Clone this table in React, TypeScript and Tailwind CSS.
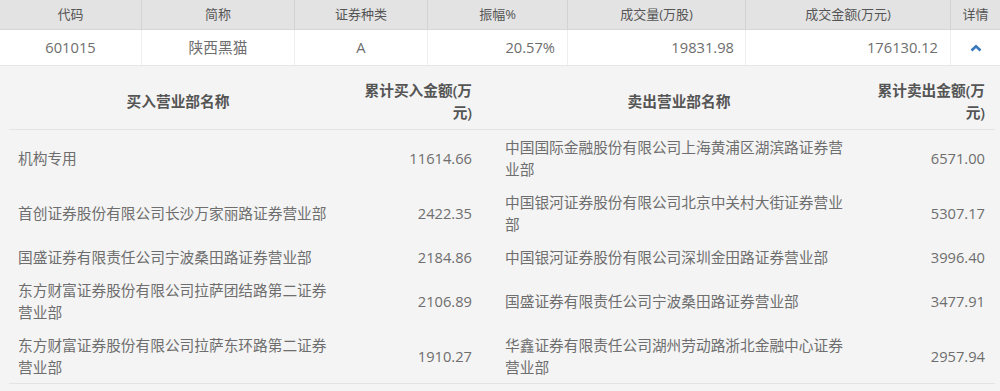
import React from 'react';

const summary = {
    code: '601015',
    name: '陕西黑猫',
    type: 'A',
    amplitude: '20.57%',
    volume: '19831.98',
    turnover: '176130.12',
};

const rows = [
    { buy: '机构专用', buyAmt: '11614.66', sell: '中国国际金融股份有限公司上海黄浦区湖滨路证券营业部', sellAmt: '6571.00' },
    { buy: '首创证券股份有限公司长沙万家丽路证券营业部', buyAmt: '2422.35', sell: '中国银河证券股份有限公司北京中关村大街证券营业部', sellAmt: '5307.17' },
    { buy: '国盛证券有限责任公司宁波桑田路证券营业部', buyAmt: '2184.86', sell: '中国银河证券股份有限公司深圳金田路证券营业部', sellAmt: '3996.40' },
    { buy: '东方财富证券股份有限公司拉萨团结路第二证券营业部', buyAmt: '2106.89', sell: '国盛证券有限责任公司宁波桑田路证券营业部', sellAmt: '3477.91' },
    { buy: '东方财富证券股份有限公司拉萨东环路第二证券营业部', buyAmt: '1910.27', sell: '华鑫证券有限责任公司湖州劳动路浙北金融中心证券营业部', sellAmt: '2957.94' },
];

const font = { fontFamily: '"Open Sans", "Noto Sans CJK SC", sans-serif' };

const App = () => {
    return (
        <div className="w-[1000px] h-[391px] overflow-hidden bg-[#f4f4f4]" style={font}>
            {/* summary table */}
            <div className="grid grid-cols-[141px_153px_133px_140px_178px_205px_50px] bg-[#e3e3e3] border-b border-[#d6d6d6] text-[13px] text-[#555] h-[30px]">
                <div className="flex items-center justify-center">代码</div>
                <div className="flex items-center justify-center border-l border-[#d3d3d3]">简称</div>
                <div className="flex items-center justify-center border-l border-[#d3d3d3]">证券种类</div>
                <div className="flex items-center justify-center border-l border-[#d3d3d3]">振幅%</div>
                <div className="flex items-center justify-center border-l border-[#d3d3d3]">成交量(万股)</div>
                <div className="flex items-center justify-center border-l border-[#d3d3d3]">成交金额(万元)</div>
                <div className="flex items-center justify-center border-l border-[#d3d3d3]">详情</div>
            </div>
            <div className="grid grid-cols-[141px_153px_133px_140px_178px_205px_50px] bg-white border-b border-[#e6e6e6] text-[14.7px] text-[#6e6e6e] h-[36px]">
                <div className="flex items-center justify-center">{summary.code}</div>
                <div className="flex items-center justify-center border-l border-[#eeeeee]">{summary.name}</div>
                <div className="flex items-center justify-center border-l border-[#eeeeee]">{summary.type}</div>
                <div className="flex items-center justify-end pr-[12px] border-l border-[#eeeeee]">{summary.amplitude}</div>
                <div className="flex items-center justify-end pr-[11px] border-l border-[#eeeeee]">{summary.volume}</div>
                <div className="flex items-center justify-end pr-[12px] border-l border-[#eeeeee]">{summary.turnover}</div>
                <div className="flex items-center justify-center border-l border-[#eeeeee]">
                    <svg width="12" height="8" viewBox="0 0 12 8">
                        <polyline points="1.5,6.5 6,2.2 10.5,6.5" fill="none" stroke="#3a78bd" strokeWidth="2.6" />
                    </svg>
                </div>
            </div>

            {/* detail: buy / sell brokers */}
            <div className="pl-[9px] pr-[5px] pt-[7px]">
                <div className="grid grid-cols-[338px_148px_368px_132px] text-[14.7px] leading-[22px] text-[#6e6e6e] border-b border-[#e4e4e4]">
                    <div className="px-[9px] py-[6px] flex items-center justify-center font-semibold text-[#555] border-b border-[#e4e4e4]">买入营业部名称</div>
                    <div className="pl-[10px] pr-[23px] py-[6px] flex items-center justify-end text-right font-semibold text-[#555] border-b border-[#e4e4e4]">累计买入金额(万元)</div>
                    <div className="px-[10px] py-[6px] flex items-center justify-center font-semibold text-[#555] border-b border-[#e4e4e4]">卖出营业部名称</div>
                    <div className="pl-[10px] pr-[10px] py-[6px] flex items-center justify-end text-right font-semibold text-[#555] border-b border-[#e4e4e4]">累计卖出金额(万元)</div>

                    {rows.map((r, i) => (
                        <React.Fragment key={i}>
                            <div className="px-[9px] py-[5.5px] flex items-center">{r.buy}</div>
                            <div className="pl-[10px] pr-[23px] py-[5.5px] flex items-center justify-end">{r.buyAmt}</div>
                            <div className="px-[10px] py-[5.5px] flex items-center">{r.sell}</div>
                            <div className="pl-[10px] pr-[10px] py-[5.5px] flex items-center justify-end">{r.sellAmt}</div>
                        </React.Fragment>
                    ))}
                </div>
            </div>
        </div>
    );
};

export default App;
